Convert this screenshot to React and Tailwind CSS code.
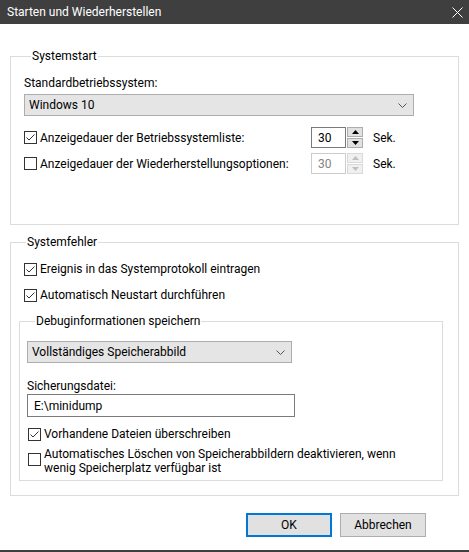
import React from 'react';

const font = { fontFamily: 'Roboto, "Liberation Sans", sans-serif' };

const CheckBox = ({ checked }) => (
  <span className="w-[13px] h-[13px] shrink-0 border border-[#333333] bg-white flex items-center justify-center">
    {checked && (
      <svg width="11" height="11" viewBox="0 0 11 11">
        <path d="M1.5 5.5 L4 8 L9.5 2.5" fill="none" stroke="#333333" strokeWidth="1" />
      </svg>
    )}
  </span>
);

const Chevron = () => (
  <svg width="9" height="5" viewBox="0 0 9 5">
    <path d="M0.5 0.5 L4.5 4.5 L8.5 0.5" fill="none" stroke="#555555" strokeWidth="1" />
  </svg>
);

const Combo = ({ value, width }) => (
  <div className={`${width} h-[22px] bg-[#e5e5e5] border border-[#adadad] flex items-center justify-between pl-[4px] pr-[6px]`}>
    <span>{value}</span>
    <Chevron />
  </div>
);

const Spin = ({ disabled }) => {
  const border = disabled ? 'border-[#cccccc]' : 'border-[#7a7a7a]';
  const btn = disabled ? 'border-[#d9d9d9] bg-[#f0f0f0]' : 'border-[#adadad] bg-[#e1e1e1]';
  const arrow = disabled ? '#bfbfbf' : '#000000';
  return (
    <div className="flex h-[21px]">
      <div className={`w-[35px] h-full border ${border} flex items-center pl-[6px] ${disabled ? 'text-[#838383]' : ''}`}>30</div>
      <div className="flex flex-col justify-between w-[17px] pl-[1px]">
        <div className={`h-[10px] border ${btn} flex items-center justify-center`}>
          <svg width="7" height="4" viewBox="0 0 7 4"><path d="M3.5 0 L7 4 L0 4 Z" fill={arrow} /></svg>
        </div>
        <div className={`h-[10px] border ${btn} flex items-center justify-center`}>
          <svg width="7" height="4" viewBox="0 0 7 4"><path d="M0 0 L7 0 L3.5 4 Z" fill={arrow} /></svg>
        </div>
      </div>
    </div>
  );
};

const SpinRow = ({ checked, label, disabled, className }) => (
  <div className={`flex items-center ${className}`}>
    <div className="w-[287px] flex items-center gap-[3px]">
      <CheckBox checked={checked} />
      <span>{label}</span>
    </div>
    <Spin disabled={disabled} />
    <span className="ml-[10px]">Sek.</span>
  </div>
);

const CheckRow = ({ checked, label, className }) => (
  <div className={`flex items-center gap-[3px] h-[16px] ${className}`}>
    <CheckBox checked={checked} />
    <span>{label}</span>
  </div>
);

export default function App() {
  return (
    <div className="w-[469px] h-[552px] bg-white flex flex-col border-b-2 border-[#3f3f3f] text-[12px] leading-[16px] text-black" style={font}>
      <div className="h-[24px] bg-[#3f3f3f] flex items-center justify-between pl-[7px] pr-[6px] text-white">
        <span>Starten und Wiederherstellen</span>
        <svg width="11" height="11" viewBox="0 0 11 11">
          <path d="M0.5 0.5 L10.5 10.5 M10.5 0.5 L0.5 10.5" stroke="#ffffff" strokeWidth="1" />
        </svg>
      </div>

      <div className="flex flex-col px-[10px] pt-[24px]">
        <fieldset className="border border-[#dcdcdc] pl-[13px] pb-[50px]">
          <legend className="ml-[7px] px-[1px]">Systemstart</legend>
          <div className="mt-[11px]">Standardbetriebssystem:</div>
          <div className="mt-[3px]">
            <Combo value="Windows 10" width="w-[390px]" />
          </div>
          <SpinRow checked label="Anzeigedauer der Betriebssystemliste:" className="mt-[11px]" />
          <SpinRow label="Anzeigedauer der Wiederherstellungsoptionen:" disabled className="mt-[5px]" />
        </fieldset>

        <fieldset className="mt-[9px] border border-[#dcdcdc] pl-[8px] pb-[14px]">
          <legend className="ml-[7px] px-[1px]">Systemfehler</legend>
          <CheckRow checked label="Ereignis in das Systemprotokoll eintragen" className="mt-[11px] pl-[5px]" />
          <CheckRow checked label="Automatisch Neustart durchführen" className="mt-[10px] pl-[5px]" />

          <fieldset className="mt-[10px] w-[424px] border border-[#dcdcdc] pl-[7px] pb-[5px]">
            <legend className="ml-[8px] px-[1px]">Debuginformationen speichern</legend>
            <div className="mt-[12px]">
              <Combo value="Vollständiges Speicherabbild" width="w-[265px]" />
            </div>
            <div className="mt-[15px]">Sicherungsdatei:</div>
            <div className="w-[268px] h-[23px] border border-[#7a7a7a] flex items-center pl-[6px]">E:\minidump</div>
            <CheckRow checked label="Vorhandene Dateien überschreiben" className="mt-[9px] pl-[1px]" />
            <div className="mt-[5px] pl-[1px] flex items-start gap-[3px]">
              <span className="mt-[6px]"><CheckBox /></span>
              <span className="leading-[14px]">
                Automatisches Löschen von Speicherabbildern deaktivieren, wenn
                <br />
                wenig Speicherplatz verfügbar ist
              </span>
            </div>
          </fieldset>
        </fieldset>

        <div className="flex justify-end gap-[8px] pr-[33px] mt-[17px]">
          <button className="w-[86px] h-[24px] bg-[#e1e1e1] border-2 border-[#0078d7]">OK</button>
          <button className="w-[86px] h-[24px] bg-[#e1e1e1] border border-[#adadad]">Abbrechen</button>
        </div>
      </div>
    </div>
  );
}
